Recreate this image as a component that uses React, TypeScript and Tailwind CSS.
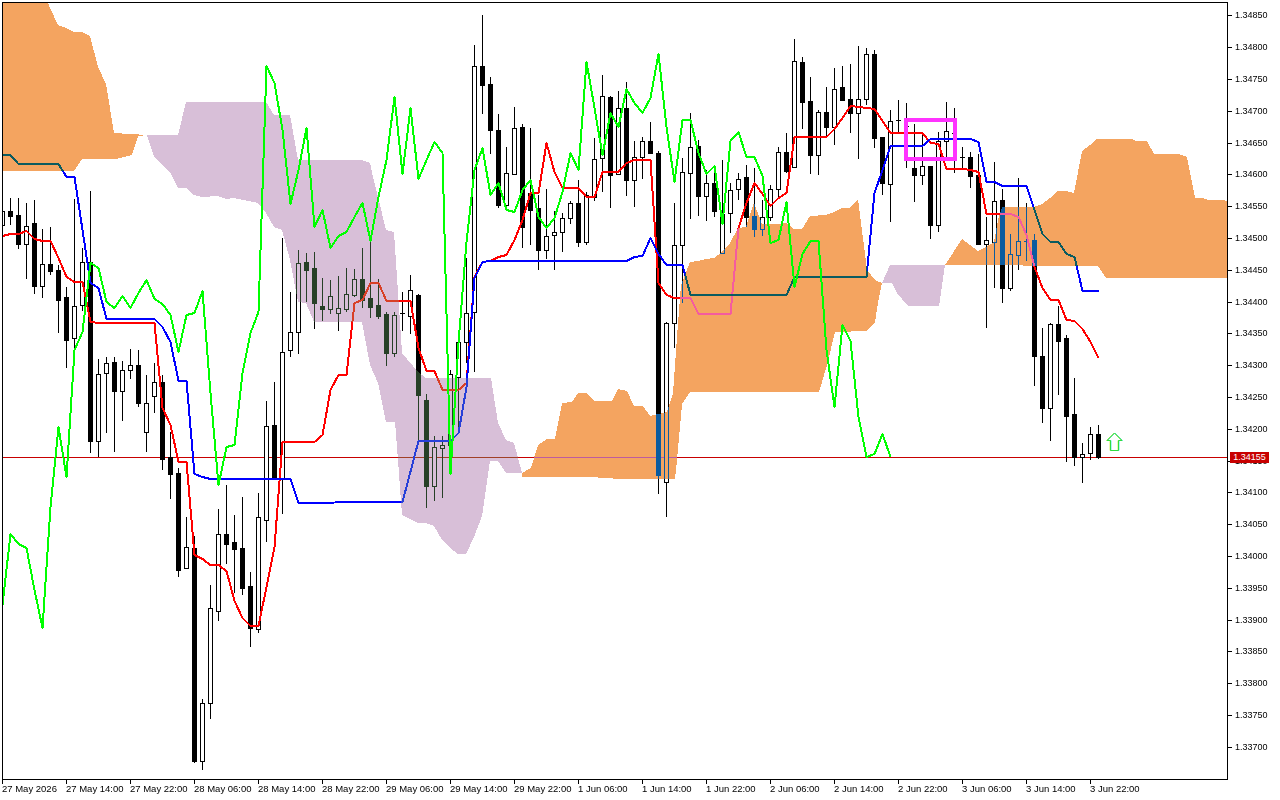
type Candle = [number, number, number, number, number];

// high, low, body top, body bottom, white = 1 (pixel rows, one per 8px starting at x=2)
const candles: Candle[] = [
  [198, 240, 211, 225, 1], [198, 224, 211, 216, 0], [198, 248, 215, 244, 0], [203, 278, 226, 244, 1],
  [200, 293, 223, 286, 0], [229, 297, 264, 286, 1], [227, 274, 264, 271, 0], [265, 332, 270, 300, 0],
  [287, 367, 297, 340, 0], [199, 350, 306, 338, 1], [248, 310, 262, 305, 1], [191, 452, 262, 441, 0],
  [359, 456, 374, 441, 1], [357, 432, 363, 373, 1], [357, 451, 362, 391, 0], [361, 420, 370, 391, 1],
  [349, 378, 365, 370, 1], [350, 406, 365, 403, 0], [375, 451, 403, 432, 1], [363, 412, 382, 396, 1],
  [375, 469, 382, 459, 0], [432, 498, 457, 474, 0], [468, 576, 473, 570, 0], [517, 568, 547, 568, 1],
  [536, 762, 548, 761, 0], [699, 769, 703, 761, 1], [585, 718, 608, 703, 1], [509, 620, 534, 611, 1],
  [485, 563, 534, 544, 0], [515, 592, 542, 549, 0], [497, 594, 548, 588, 0], [572, 646, 586, 628, 0],
  [493, 632, 517, 629, 1], [401, 541, 426, 520, 1], [382, 479, 425, 479, 0], [238, 513, 352, 479, 1],
  [292, 356, 332, 350, 1], [250, 353, 263, 332, 1], [253, 301, 262, 270, 0], [252, 328, 268, 303, 0],
  [278, 320, 306, 309, 0], [280, 313, 296, 309, 1], [276, 330, 308, 313, 1], [268, 311, 294, 309, 1],
  [269, 296, 279, 295, 1], [248, 307, 279, 300, 0], [242, 317, 298, 307, 0], [279, 318, 305, 316, 0],
  [312, 365, 314, 353, 0], [312, 356, 315, 353, 1], [292, 330, 313, 313, 0], [275, 333, 290, 316, 1],
  [294, 441, 295, 395, 0], [394, 507, 400, 486, 0], [436, 500, 447, 486, 1], [436, 497, 445, 448, 1],
  [370, 437, 374, 445, 1], [330, 433, 342, 377, 1], [258, 362, 313, 342, 1], [45, 371, 66, 312, 1],
  [15, 113, 66, 85, 0], [77, 153, 84, 130, 0], [114, 207, 130, 205, 0], [147, 206, 173, 205, 1],
  [107, 173, 128, 174, 1], [124, 247, 127, 227, 0], [128, 244, 193, 210, 0], [195, 269, 208, 250, 0],
  [189, 258, 236, 250, 1], [211, 269, 232, 235, 1], [213, 251, 218, 232, 1], [201, 223, 203, 218, 1],
  [180, 246, 203, 242, 0], [192, 244, 195, 242, 1], [138, 200, 159, 197, 1], [75, 191, 96, 158, 1],
  [96, 207, 97, 175, 0], [91, 173, 108, 174, 1], [82, 195, 108, 180, 0], [141, 206, 157, 180, 1],
  [137, 178, 141, 157, 1], [122, 153, 141, 153, 0], [151, 493, 153, 475, 0], [322, 516, 323, 482, 1],
  [203, 347, 245, 323, 1], [158, 302, 172, 245, 1], [113, 218, 147, 173, 1], [140, 215, 146, 196, 0],
  [170, 220, 183, 196, 1], [166, 216, 183, 211, 0], [160, 253, 214, 253, 1], [183, 232, 190, 213, 1],
  [173, 199, 179, 189, 1], [165, 226, 177, 217, 0], [168, 236, 216, 229, 0], [200, 235, 217, 229, 1],
  [185, 220, 189, 217, 1], [147, 197, 152, 189, 1], [133, 172, 152, 171, 0], [39, 167, 61, 167, 1],
  [57, 128, 62, 102, 0], [77, 173, 101, 155, 0], [110, 174, 112, 155, 1], [87, 137, 112, 127, 0],
  [68, 144, 89, 127, 1], [66, 100, 87, 100, 0], [64, 132, 99, 113, 0], [46, 158, 99, 113, 1],
  [48, 104, 54, 99, 1], [50, 147, 54, 138, 0], [137, 194, 137, 183, 0], [110, 221, 121, 184, 1],
  [100, 132, 120, 120, 0], [103, 167, 126, 126, 0], [124, 201, 168, 175, 0], [132, 184, 166, 175, 1],
  [170, 238, 166, 225, 0], [132, 231, 141, 225, 1], [102, 160, 131, 141, 1], [108, 172, 133, 133, 0],
  [147, 168, 157, 157, 0], [152, 187, 157, 176, 0], [154, 244, 175, 244, 0], [217, 327, 240, 244, 1],
  [162, 287, 201, 242, 1], [189, 302, 200, 288, 0], [234, 290, 254, 288, 1], [178, 269, 241, 255, 1],
  [203, 260, 241, 241, 0], [234, 385, 240, 356, 0], [328, 422, 356, 408, 0], [323, 440, 324, 408, 1],
  [306, 394, 324, 341, 0], [335, 461, 338, 416, 0], [378, 465, 414, 457, 0], [443, 482, 454, 457, 1],
  [427, 459, 434, 453, 1], [425, 458, 434, 457, 0],
];

const greenLine = "2,605 10,534 18,544 26,548 34,590 42,628 50,507 58,427 66,477 74,350 82,332 90,263 98,268 106,302 114,308 122,296 130,308 138,293 146,280 154,299 162,304 170,315 178,352 186,315 194,313 202,291 210,393 218,485 226,447 234,445 242,373 250,333 258,312 266,66 274,83 282,130 290,204 298,170 306,128 314,227 322,210 330,248 338,236 346,232 354,217 362,203 370,241 378,197 386,160 394,97 402,174 410,108 418,179 426,160 434,142 442,153 450,474 458,343 466,242 474,170 482,148 490,195 498,183 506,210 514,212 522,190 530,180 538,217 546,228 554,218 562,192 570,153 578,170 586,62 594,108 602,155 610,113 618,127 626,89 634,103 642,113 650,98 658,54 666,127 674,182 682,120 690,120 698,153 706,174 714,166 722,224 730,141 738,132 746,157 754,157 762,176 770,243 778,240 786,202 794,287 802,254 810,241 818,241 826,350 834,407 842,325 850,341 858,417 866,457 874,454 882,434 890,457";
const blueLine = "2,155 10,155 18,164 58,164 66,177 74,177 82,230 90,283 98,288 106,319 154,319 162,327 170,342 178,381 186,381 194,474 202,477 210,479 290,479 298,503 371,502 402,502 418,441 450,441 458,433 466,387 474,278 482,262 490,261 626,261 634,257 642,256 650,238 658,254 666,265 682,265 690,295 786,295 794,277 866,277 874,193 882,170 890,146 922,146 930,139 970,139 978,142 986,182 994,182 1002,186 1026,186 1034,210 1042,234 1050,242 1058,242 1066,254 1074,257 1082,291 1098,291";
const redLine = "2,236 10,234 18,234 26,231 34,239 42,241 50,241 58,258 66,277 74,282 82,282 90,322 98,323 154,323 162,408 170,425 178,462 186,462 194,555 202,559 210,565 218,565 226,571 234,601 242,618 250,626 258,626 266,587 274,547 282,442 290,442 314,442 322,435 330,390 338,375 346,375 354,303 362,300 370,283 378,283 386,301 410,301 418,348 426,371 434,371 442,390 458,390 466,383 474,277 482,262 490,261 498,257 506,255 514,240 522,220 530,193 538,193 546,143 554,172 562,188 578,188 586,197 594,197 602,172 618,172 626,163 634,160 650,160 658,283 666,295 674,298 690,298 698,314 730,314 738,228 746,203 754,183 762,194 770,206 778,198 786,193 794,137 826,137 834,129 842,118 850,106 858,107 874,109 890,133 922,133 930,143 938,144 946,169 962,169 970,170 978,172 986,214 1010,214 1018,217 1026,235 1034,267 1042,288 1050,300 1058,300 1066,320 1074,321 1082,329 1090,342 1098,358";

// cloud fills use the inverted colour with a difference blend, so what lies under them shows through as in the terminal
const orangeFills = [
  "2,2 48,2 50,8 58,25 66,28 74,32 82,32 90,36 98,67 106,84 114,133 147,135 138,136 132,155 116,159 82,159 74,171 2,171",
  "522,473 531,468 538,445 547,439 555,439 562,403 572,402 578,393 587,393 594,401 612,401 618,389 627,391 634,406 643,406 650,416 667,412 673,393 678,323 681,285 690,262 698,261 706,259 714,258 722,252 730,243 738,228 746,227 754,203 762,224 778,224 786,223 794,229 802,229 810,216 826,215 834,212 842,208 850,208 858,199 867,270 875,280 882,283 878,303 875,322 867,331 835,332 827,365 819,392 690,392 682,404 677,460 675,479 621,479 590,477 522,477",
  "945,265 962,239 978,251 986,247 994,242 998,220 1002,207 1034,207 1042,204 1050,198 1058,191 1066,191 1074,193 1082,151 1090,145 1097,139 1132,139 1136,141 1147,141 1154,154 1179,154 1187,157 1195,198 1203,198 1208,200 1222,200 1228,201 1228,278 1106,278 1098,266",
];
const thistleFills = [
  "147,135 178,135 186,102 266,102 274,115 290,115 298,160 362,160 370,163 373,177 378,197 386,230 394,232 402,353 418,372 426,378 491,378 498,423 506,440 514,443 522,473 506,473 498,461 490,461 482,516 474,537 466,554 458,554 450,548 442,540 434,526 426,523 418,523 410,519 402,515 398,460 395,422 386,422 378,383 370,365 362,322 314,322 306,303 298,302 290,260 282,230 274,227 266,213 258,203 234,198 226,199 218,196 202,197 194,195 186,188 178,188 170,172 154,157",
  "882,283 890,265 945,265 939,306 908,306 897,293 892,283",
];

const arrow = "M1114.5 433 L1122 440.5 H1118.5 V450.5 H1110.5 V440.5 H1107 Z";

const prices = Array.from({ length: 24 }, (_, i) => (1.3485 - i * 0.0005).toFixed(5));
const times = [
  "27 May 2026", "27 May 14:00", "27 May 22:00", "28 May 06:00", "28 May 14:00", "28 May 22:00",
  "29 May 06:00", "29 May 14:00", "29 May 22:00", "1 Jun 06:00", "1 Jun 14:00", "1 Jun 22:00",
  "2 Jun 06:00", "2 Jun 14:00", "2 Jun 22:00", "3 Jun 06:00", "3 Jun 14:00", "3 Jun 22:00",
];

function Candles() {
  return (
    <g>
      {candles.map(([high, low, top, bottom, white], i) => {
        const x = 2 + i * 8;
        return (
          <g key={x}>
            <rect x={x} y={high} width={1} height={low - high + 1} fill="#000" />
            <rect x={x - 2} y={top} width={5} height={bottom - top + 1} fill="#000" />
            {white === 1 && bottom - top > 1 && (
              <rect x={x - 1} y={top + 1} width={3} height={bottom - top - 1} fill="#fff" />
            )}
          </g>
        );
      })}
    </g>
  );
}

export default function App() {
  return (
    <div className="relative flex h-[800px] w-[1280px] flex-col overflow-hidden bg-white font-['Liberation_Sans',sans-serif] text-[9.5px] leading-none text-black">
      <div className="flex h-[780px]">
        <div className="ml-[2px] mt-[2px] h-[778px] w-[1226px] border border-black">
          <svg width="1224" height="776" viewBox="3 3 1224 776" shapeRendering="crispEdges" className="block">
            <rect x="3" y="3" width="1224" height="776" fill="#fff" />
            <rect x="3" y="457" width="1224" height="1" fill="#c80000" />
            <Candles />
            <g fill="none" strokeWidth="2" strokeLinejoin="round" transform="translate(0.5 0)">
              <polyline points={redLine} stroke="#ff0000" />
              <polyline points={blueLine} stroke="#0000ff" />
            </g>
            {orangeFills.map((p) => (
              <polygon key={p} points={p} fill="#0b5b9f" className="mix-blend-difference" />
            ))}
            {thistleFills.map((p) => (
              <polygon key={p} points={p} fill="#274027" className="mix-blend-difference" />
            ))}
            <polyline points={greenLine} fill="none" stroke="#00ff00" strokeWidth="2" strokeLinejoin="round" transform="translate(0.5 0)" />
            <rect x="906" y="120" width="49" height="39" fill="none" stroke="#ff33ff" strokeWidth="4" />
            <g fill="none" strokeWidth="1" shapeRendering="auto">
              <path d={arrow} stroke="#d8f060" transform="translate(-0.5 0)" />
              <path d={arrow} stroke="#60e8f0" transform="translate(0.5 0)" />
              <path d={arrow} stroke="#30dc40" />
            </g>
          </svg>
        </div>
        <ul className="flex flex-col text-[9px]">
          {prices.map((p) => (
            <li key={p} className="flex h-[31.8px] items-center">
              <span className="h-px w-[4px] bg-black" />
              <span className="ml-[3px]">{p}</span>
            </li>
          ))}
        </ul>
      </div>
      <div className="ml-[2px] flex">
        {times.map((t) => (
          <div key={t} className="flex w-[64px] flex-col items-start">
            <span className="h-[4px] w-px bg-black" />
            <span className="whitespace-nowrap">{t}</span>
          </div>
        ))}
      </div>
      <div className="absolute left-[1230px] top-[452px] flex h-[11px] w-[39px] items-center justify-center bg-[#c80000] text-[9px] text-white">
        1.34155
      </div>
    </div>
  );
}
